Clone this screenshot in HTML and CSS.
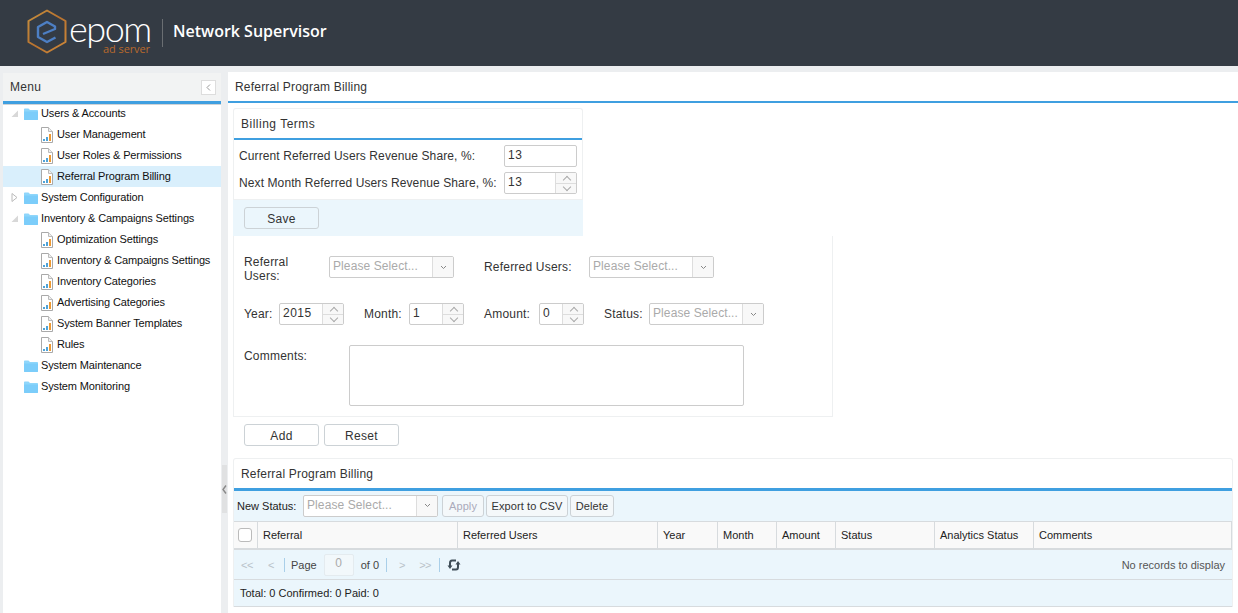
FILE: index.html
```html
<!DOCTYPE html>
<html lang="en">
<head>
<meta charset="utf-8">
<title>Referral Program Billing</title>
<link rel="stylesheet" href="styles.css">
</head>
<body>
<svg class="defs" width="0" height="0" aria-hidden="true">
  <defs>
    <linearGradient id="hex" x1="0" y1="0" x2="1" y2="1">
      <stop offset="0" stop-color="#c9923f"/><stop offset=".5" stop-color="#b8722f"/><stop offset="1" stop-color="#d08a3a"/>
    </linearGradient>
    <symbol id="folder" viewBox="0 0 14 12">
      <path d="M0 1.500C0 .8.4.5 1 .5h3.500L6 2h7c.6 0 1 .4 1 1v8c0 .6-.4 1-1 1H1c-.6 0-1-.4-1-1z" fill="#8fd6fb"/>
      <path d="M0 3.500h14V11c0 .6-.4 1-1 1H1c-.6 0-1-.4-1-1z" fill="#7ccdfa"/>
    </symbol>
    <symbol id="report" viewBox="0 0 12 16">
      <path d="M.5.5h7l4 4v11H.5z" fill="#fff" stroke="#a9a9a9"/>
      <path d="M7.500.5v4h4" fill="#eee" stroke="#bbb"/>
      <rect x="2" y="12" width="2" height="2" fill="#4fa3d8"/>
      <rect x="5" y="10" width="2" height="4" fill="#4fa3d8"/>
      <rect x="8" y="7" width="2" height="7" fill="#ee9a33"/>
    </symbol>
  </defs>
</svg>

<header class="topbar">
  <div class="logo">
    <svg class="logo-mark" width="40" height="46" viewBox="0 0 40 46">
      <path d="M20 1.500 38.500 12v21L20 43.500 1.500 33V12z" fill="none" stroke="url(#hex)" stroke-width="2" stroke-linejoin="round"/>
      <path d="M16 25 28 20V17.500L20 13 11 18V28L20 33 28.500 28.500" fill="none" stroke="#4d7fc4" stroke-width="2.400" stroke-linejoin="round"/>
    </svg>
    <div class="logo-words">
      <span class="logo-name">epom</span>
      <span class="logo-sub">ad server</span>
    </div>
  </div>
  <div class="role">Network Supervisor</div>
</header>

<div class="workspace">
  <aside class="sidebar">
    <div class="side-head">
      <span>Menu</span>
      <button class="collapse" type="button" aria-label="Collapse"><svg width="5" height="7" viewBox="0 0 5 7"><path d="M4 .5 1 3.500 4 6.500" fill="none" stroke="#999"/></svg></button>
    </div>
    <ul class="tree">
      <li class="node"><svg class="arrow" width="9" height="9" viewBox="0 0 9 9"><path d="M8 1.500V8H1.500z" fill="#d8d8d8"/></svg><svg class="folder"><use href="#folder"/></svg>Users &amp; Accounts</li>
      <li class="node leaf"><svg class="report"><use href="#report"/></svg>User Management</li>
      <li class="node leaf"><svg class="report"><use href="#report"/></svg>User Roles &amp; Permissions</li>
      <li class="node leaf selected"><svg class="report"><use href="#report"/></svg>Referral Program Billing</li>
      <li class="node"><svg class="arrow" width="9" height="9" viewBox="0 0 9 9"><path d="M2 .5 7 4.500 2 8.500z" fill="#fff" stroke="#bbb"/></svg><svg class="folder"><use href="#folder"/></svg>System Configuration</li>
      <li class="node"><svg class="arrow" width="9" height="9" viewBox="0 0 9 9"><path d="M8 1.500V8H1.500z" fill="#d8d8d8"/></svg><svg class="folder"><use href="#folder"/></svg>Inventory &amp; Campaigns Settings</li>
      <li class="node leaf"><svg class="report"><use href="#report"/></svg>Optimization Settings</li>
      <li class="node leaf"><svg class="report"><use href="#report"/></svg>Inventory &amp; Campaigns Settings</li>
      <li class="node leaf"><svg class="report"><use href="#report"/></svg>Inventory Categories</li>
      <li class="node leaf"><svg class="report"><use href="#report"/></svg>Advertising Categories</li>
      <li class="node leaf"><svg class="report"><use href="#report"/></svg>System Banner Templates</li>
      <li class="node leaf"><svg class="report"><use href="#report"/></svg>Rules</li>
      <li class="node"><span class="arrow-space"></span><svg class="folder"><use href="#folder"/></svg>System Maintenance</li>
      <li class="node"><span class="arrow-space"></span><svg class="folder"><use href="#folder"/></svg>System Monitoring</li>
    </ul>
  </aside>

  <div class="splitter"><span class="split-grip"><svg width="5" height="9" viewBox="0 0 5 9"><path d="M4 .5 1 4.500 4 8.500" fill="none" stroke="#888" stroke-width="1.400"/></svg></span></div>

  <main class="main">
    <h1 class="page-title">Referral Program Billing</h1>

    <section class="terms">
      <h2 class="panel-title wide-title">Billing Terms</h2>
      <div class="terms-body">
        <div class="terms-row">
          <label class="terms-label">Current Referred Users Revenue Share, %:</label>
          <div class="field w73"><span class="value">13</span></div>
        </div>
        <div class="terms-row">
          <label class="terms-label">Next Month Referred Users Revenue Share, %:</label>
          <div class="field w73"><span class="value">13</span><span class="spin"><i class="up"></i><i class="down"></i></span></div>
        </div>
      </div>
      <div class="terms-foot"><button class="btn btn-wide tinted" type="button">Save</button></div>
    </section>

    <section class="form">
      <div class="form-row row-a">
        <label class="lbl lbl-ref">Referral Users:</label>
        <div class="field combo w125"><span class="placeholder">Please Select...</span><span class="drop"><svg width="7" height="5" viewBox="0 0 7 5"><path d="M1 1 3.500 3.500 6 1" fill="none" stroke="#888"/></svg></span></div>
        <label class="lbl lbl-refd">Referred Users:</label>
        <div class="field combo w125"><span class="placeholder">Please Select...</span><span class="drop"><svg width="7" height="5" viewBox="0 0 7 5"><path d="M1 1 3.500 3.500 6 1" fill="none" stroke="#888"/></svg></span></div>
      </div>
      <div class="form-row row-b">
        <label class="lbl lbl-year">Year:</label>
        <div class="field w65"><span class="value">2015</span><span class="spin"><i class="up"></i><i class="down"></i></span></div>
        <label class="lbl lbl-month">Month:</label>
        <div class="field w55"><span class="value">1</span><span class="spin"><i class="up"></i><i class="down"></i></span></div>
        <label class="lbl lbl-amount">Amount:</label>
        <div class="field w45"><span class="value">0</span><span class="spin"><i class="up"></i><i class="down"></i></span></div>
        <label class="lbl lbl-status">Status:</label>
        <div class="field combo w115"><span class="placeholder">Please Select...</span><span class="drop"><svg width="7" height="5" viewBox="0 0 7 5"><path d="M1 1 3.500 3.500 6 1" fill="none" stroke="#888"/></svg></span></div>
      </div>
      <div class="form-row row-c">
        <label class="lbl lbl-comments">Comments:</label>
        <div class="textarea"></div>
      </div>
    </section>

    <div class="form-actions">
      <button class="btn btn-wide" type="button">Add</button>
      <button class="btn btn-wide" type="button">Reset</button>
    </div>

    <section class="grid-panel">
      <h2 class="panel-title">Referral Program Billing</h2>
      <div class="grid-toolbar">
        <span class="tb-label">New Status:</span>
        <div class="field combo w135"><span class="placeholder">Please Select...</span><span class="drop"><svg width="7" height="5" viewBox="0 0 7 5"><path d="M1 1 3.500 3.500 6 1" fill="none" stroke="#888"/></svg></span></div>
        <button class="btn small disabled apply" type="button">Apply</button>
        <button class="btn small export" type="button">Export to CSV</button>
        <button class="btn small delete" type="button">Delete</button>
      </div>
      <div class="grid-head">
        <div class="col c-check"><span class="checkbox"></span></div>
        <div class="col c-ref">Referral</div>
        <div class="col c-users">Referred Users</div>
        <div class="col c-year">Year</div>
        <div class="col c-month">Month</div>
        <div class="col c-amount">Amount</div>
        <div class="col c-status">Status</div>
        <div class="col c-analytics">Analytics Status</div>
        <div class="col c-comments">Comments</div>
      </div>
      <div class="pager">
        <span class="pg-btn pg-first">&lt;&lt;</span>
        <span class="pg-btn pg-prev">&lt;</span>
        <span class="pg-sep"></span>
        <span class="pg-text">Page</span>
        <span class="pg-input">0</span>
        <span class="pg-text">of 0</span>
        <span class="pg-sep pg-sep-next"></span>
        <span class="pg-btn pg-next">&gt;</span>
        <span class="pg-btn pg-last">&gt;&gt;</span>
        <span class="pg-sep pg-sep-last"></span>
        <svg class="refresh" width="14" height="14" viewBox="0 0 14 14"><path d="M9 2.500H5C3.500 2.500 3 3.500 3 5V8M5 11.500H9C10.500 11.500 11 10.500 11 9V6" fill="none" stroke="#3f4d57" stroke-width="2"/><path d="M.5 7.500H5.500L3 11zM8.500 6.500H13.500L11 3z" fill="#3f4d57"/></svg>
        <span class="pg-info">No records to display</span>
      </div>
      <div class="totals">Total: 0 Confirmed: 0 Paid: 0</div>
    </section>
  </main>
</div>
</body>
</html>
```
FILE: styles.css
```css
* { box-sizing: border-box; }
html, body { margin: 0; height: 100%; overflow: hidden; }
body { font-family: "Liberation Sans", Arial, sans-serif; font-size: 11px; color: #222; background: #eceef0; width: 1238px; height: 613px; }
.defs { position: absolute; }
ul { list-style: none; margin: 0; padding: 0; }
h1, h2 { margin: 0; font-weight: 400; }

.topbar { height: 66px; background: #343b44; display: flex; align-items: center; padding-left: 27px; }
.logo { display: flex; align-items: flex-start; height: 46px; width: 135px; }
.logo-mark { flex: none; margin-top: -1px; }
.logo-words { display: flex; flex-direction: column; margin-left: 2px; width: 81px; }
.logo-name { font-family: Lato, sans-serif; font-weight: 300; font-size: 36px; line-height: 24px; color: #fff; margin-top: 6px; letter-spacing: -1.5px; white-space: nowrap; }
.logo-sub { font-family: "Open Sans", sans-serif; font-size: 11px; line-height: 11px; color: #b8692c; text-align: right; margin-top: 3px; letter-spacing: -.1px; }
.role { border-left: 1px solid #6a6e72; height: 28px; line-height: 24px; padding-left: 10px; font-family: "Open Sans", sans-serif; font-weight: 600; font-size: 16px; color: #fff; }

.workspace { display: flex; height: 547px; padding: 6px 0 0 3px; }
.sidebar { width: 218px; flex: none; background: #fff; }
.side-head { height: 29px; background: #f2f3f3; display: flex; align-items: center; justify-content: space-between; padding: 0 5px 0 7px; font-size: 12px; letter-spacing: .3px; color: #333; border-top: 1px solid #eceef0; }
.collapse { width: 15px; height: 15px; padding: 0; background: #fff; border: 1px solid #ddd; display: flex; align-items: center; justify-content: center; }
.tree { border-top: 3px solid #3f9fe0; box-shadow: inset 0 1px 0 #cfd3d6; height: 512px; }
.node { height: 21px; display: flex; align-items: center; color: #111; padding: 0 0 2px 7px; letter-spacing: -.13px; white-space: nowrap; }
.tree .node:first-child { margin-top: -1px; }
.arrow { flex: none; width: 9px; margin: 2px 5px 0 0; }
.arrow-space { width: 14px; flex: none; }
.folder { width: 14px; height: 12px; margin: 3px 3px 0 0; flex: none; }
.report { width: 12px; height: 16px; margin: 3px 4px 0 0; flex: none; }
.leaf { padding-left: 38px; }
.selected { background: #d9effc; }

.splitter { width: 7px; flex: none; display: flex; align-items: flex-start; padding-top: 393px; padding-left: 1px; }
.split-grip { width: 5px; height: 48px; background: #e0e1e2; display: flex; align-items: center; justify-content: center; }

.main { flex: 1; min-width: 0; background: #fff; }
.page-title { height: 31px; line-height: 30px; padding-left: 7px; font-size: 12px; letter-spacing: .2px; color: #333; border-bottom: 2px solid #3f9fe0; }

.terms { width: 350px; margin: 5px 0 0 5px; border: 1px solid #eef0f1; border-bottom: 0; border-radius: 3px 3px 0 0; }
.panel-title { height: 31px; line-height: 30px; padding-left: 7px; font-size: 12px; letter-spacing: .2px; color: #333; border-bottom: 2px solid #3f9fe0; }
.wide-title { letter-spacing: .5px; }
.terms-body { padding-top: 5px; height: 59px; }
.terms-row { display: flex; align-items: center; justify-content: space-between; height: 22px; margin-bottom: 5px; padding: 0 5px; }
.terms-label { font-size: 12px; letter-spacing: .1px; color: #333; white-space: nowrap; }
.terms-foot { height: 37px; background: #ebf6fc; padding: 7px 0 0 11px; border-top: 1px solid #eef0f1; margin: 0 -1px; }

.field { height: 22px; border: 1px solid #ccc; border-radius: 2px; background: #fff; display: flex; align-items: stretch; overflow: hidden; flex: none; }
.value { flex: 1; font-size: 12px; letter-spacing: .5px; line-height: 18px; padding-left: 3px; color: #333; }
.spin { width: 21px; flex: none; border-left: 1px solid #ddd; display: flex; flex-direction: column; }
.spin i { flex: 1; background: #f8f8f8; position: relative; display: block; }
.spin .down { border-top: 1px solid #ddd; }
.spin i::after { content: ""; position: absolute; left: 8px; width: 5px; height: 5px; border: solid #aaa; border-width: 1px 0 0 1px; }
.spin .up::after { top: 4px; transform: rotate(45deg); }
.spin .down::after { top: 0; transform: rotate(225deg); }
.w73 { width: 73px; }
.w125 { width: 125px; }
.w115 { width: 115px; }
.w135 { width: 135px; }
.w65 { width: 65px; }
.w55 { width: 55px; }
.w45 { width: 45px; }
.placeholder { flex: 1; font-size: 12px; letter-spacing: .1px; line-height: 18px; padding-left: 3px; color: #aaa; white-space: nowrap; overflow: hidden; }
.drop { width: 21px; flex: none; border-left: 1px solid #ddd; background: #f8f8f8; display: flex; align-items: center; justify-content: center; }

.form { width: 600px; height: 181px; margin-left: 5px; border: 1px solid #eef0f1; border-top: 0; padding: 20px 0 0 10px; }
.form-row { display: flex; }
.lbl { font-size: 12px; letter-spacing: .2px; line-height: 14px; color: #333; flex: none; }
.row-a { align-items: flex-start; height: 47px; }
.lbl-ref { width: 85px; padding-right: 30px; margin-top: -1px; }
.lbl-refd { width: 105px; margin: 4px 0 0 30px; }
.row-b { align-items: center; height: 22px; }
.lbl-year { width: 35px; }
.lbl-month { width: 45px; margin-left: 20px; }
.lbl-amount { width: 55px; margin-left: 20px; }
.lbl-status { width: 45px; margin-left: 20px; }
.row-c { margin-top: 20px; }
.lbl-comments { width: 105px; margin-top: 4px; }
.textarea { width: 395px; height: 61px; border: 1px solid #ccc; border-radius: 2px; }

.form-actions { display: flex; gap: 5px; margin: 7px 0 0 16px; }
.btn { height: 22px; background: #fff; border: 1px solid #ccd2d6; border-radius: 3px; font: 12px "Liberation Sans", Arial, sans-serif; letter-spacing: .3px; color: #333; padding: 1px 0 0; }
.btn-wide { width: 75px; }
.tinted { background: #ebf6fc; }

.grid-panel { width: 1000px; margin: 12px 0 0 5px; border: 1px solid #eef0f1; border-bottom: 0; border-radius: 3px 3px 0 0; }
.grid-panel .panel-title { height: 32px; line-height: 30px; border-bottom-width: 3px; }
.grid-toolbar { height: 30px; background: #ebf6fc; display: flex; align-items: center; padding: 0 0 1px 3px; }
.tb-label { width: 66px; flex: none; }
.grid-toolbar .field { width: 135px; }
.small { height: 22px; font-size: 11px; margin-left: 2px; background: #f4f8fa; letter-spacing: .1px; flex: none; }
.apply { margin-left: 4px; width: 42px; }
.export { width: 82px; }
.delete { width: 44px; }
.disabled { color: #aab; }
.grid-head { display: flex; height: 29px; background: #f9f9f9; border-top: 1px solid #d7dbde; border-bottom: 2px solid #d7dbde; }
.col { border-right: 1px solid #d7dbde; padding-left: 5px; line-height: 27px; flex: none; }
.c-check { width: 24px; padding: 6px 0 0 4px; }
.checkbox { display: block; width: 14px; height: 14px; background: #fff; border: 1px solid #bbb; border-radius: 3px; }
.c-ref { width: 200px; }
.c-users { width: 200px; }
.c-year { width: 60px; }
.c-month { width: 59px; }
.c-amount { width: 59px; }
.c-status { width: 99px; }
.c-analytics { width: 99px; }
.c-comments { flex: 1; }
.pager { height: 30px; background: #ebf6fc; display: flex; align-items: center; padding: 0 7px 0 6px; border-bottom: 1px solid #d7dbde; }
.pg-btn { color: #b9c2c9; width: 14px; text-align: center; letter-spacing: -.5px; flex: none; }
.pg-first { margin-right: 10px; }
.pg-prev { margin-right: 6px; }
.pg-next { margin-right: 9px; }
.pg-last { margin-right: 7px; }
.pg-sep { width: 1px; height: 14px; background: #a9cfe9; margin-right: 6px; flex: none; }
.pg-sep-next { margin: 0 8px 0 7px; }
.pg-sep-last { margin-right: 7px; }
.pg-text { color: #444; flex: none; }
.pg-input { width: 30px; height: 22px; line-height: 16px; margin: 0 7px; text-align: center; background: #f2f8fb; border: 1px solid #e4ebef; color: #aaa; border-radius: 2px; font-size: 12px; flex: none; }
.pg-info { margin-left: auto; color: #555; }
.refresh { flex: none; }
.totals { height: 27px; line-height: 26px; background: #ebf6fc; padding-left: 6px; border-bottom: 1px solid #d7dbde; }
```
